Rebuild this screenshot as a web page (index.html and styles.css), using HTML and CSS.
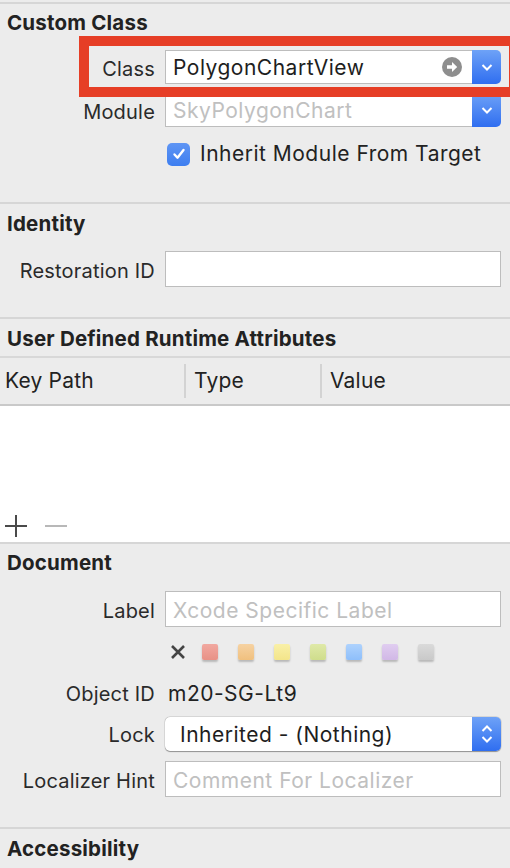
FILE: index.html
```html
<!DOCTYPE html>
<html>
<head>
<meta charset="utf-8">
<link rel="stylesheet" href="styles.css">
</head>
<body>
<div class="inspector">
  <section class="section sec-custom">
    <h2 class="heading">Custom Class</h2>
    <div class="form">
      <div class="row row-class">
        <span class="label">Class</span>
        <div class="combo">
          <div class="field combo-field">
            <span class="value">PolygonChartView</span>
            <svg class="go" width="20" height="20" viewBox="0 0 20 20"><circle cx="10" cy="10" r="10" fill="#8e8e8e"/><path d="M5 8.3h5V5l5.2 5-5.2 5v-3.3H5z" fill="#fff"/></svg>
          </div>
          <div class="blue-btn"><svg width="14" height="10" viewBox="0 0 14 10"><path d="M2.5 3l4.5 4.5L11.5 3" fill="none" stroke="#fff" stroke-width="2"/></svg></div>
        </div>
        <div class="highlight"></div>
      </div>
      <div class="row row-module">
        <span class="label">Module</span>
        <div class="combo">
          <div class="field combo-field"><span class="placeholder">SkyPolygonChart</span></div>
          <div class="blue-btn"><svg width="14" height="10" viewBox="0 0 14 10"><path d="M2.5 3l4.5 4.5L11.5 3" fill="none" stroke="#fff" stroke-width="2"/></svg></div>
        </div>
      </div>
      <div class="row row-check">
        <span class="label"></span>
        <div class="check-wrap">
          <span class="checkbox"><svg width="16" height="16" viewBox="0 0 16 16"><path d="M3.5 8.5l3 3.2L12.5 4" fill="none" stroke="#fff" stroke-width="2.4" stroke-linecap="round" stroke-linejoin="round"/></svg></span>
          <span class="check-text">Inherit Module From Target</span>
        </div>
      </div>
    </div>
  </section>

  <section class="section sec-identity">
    <h2 class="heading">Identity</h2>
    <div class="form">
      <div class="row">
        <span class="label">Restoration ID</span>
        <div class="field"></div>
      </div>
    </div>
  </section>

  <section class="section sec-attrs">
    <h2 class="heading">User Defined Runtime Attributes</h2>
    <div class="table">
      <div class="thead">
        <div class="th th-key">Key Path</div>
        <div class="th th-type">Type</div>
        <div class="th th-value">Value</div>
      </div>
      <div class="tbody">
        <div class="tools">
          <svg width="22" height="22" viewBox="0 0 22 22"><path d="M11 0v22M0 11h22" stroke="#4a4a4a" stroke-width="2"/></svg>
          <svg width="22" height="22" viewBox="0 0 22 22"><path d="M0 11h22" stroke="#b8b8b8" stroke-width="2"/></svg>
        </div>
      </div>
    </div>
  </section>

  <section class="section sec-document">
    <h2 class="heading">Document</h2>
    <div class="form">
      <div class="row row-label">
        <span class="label">Label</span>
        <div class="field"><span class="placeholder">Xcode Specific Label</span></div>
      </div>
      <div class="row row-swatches">
        <span class="label"></span>
        <div class="swatches">
          <svg class="xmark" width="16" height="16" viewBox="0 0 16 16"><path d="M2 2l12 12M14 2L2 14" stroke="#444" stroke-width="2.6"/></svg>
          <span class="swatch sw-red"></span>
          <span class="swatch sw-orange"></span>
          <span class="swatch sw-yellow"></span>
          <span class="swatch sw-green"></span>
          <span class="swatch sw-blue"></span>
          <span class="swatch sw-purple"></span>
          <span class="swatch sw-gray"></span>
        </div>
      </div>
      <div class="row row-objid">
        <span class="label">Object ID</span>
        <span class="plain">m20-SG-Lt9</span>
      </div>
      <div class="row row-lock">
        <span class="label">Lock</span>
        <div class="popup">
          <span class="popup-text">Inherited - (Nothing)</span>
          <div class="blue-btn"><svg width="14" height="22" viewBox="0 0 14 22"><path d="M2.5 8l4.5-4.5L11.5 8M2.5 14l4.5 4.5 4.5-4.5" fill="none" stroke="#fff" stroke-width="2"/></svg></div>
        </div>
      </div>
      <div class="row row-hint">
        <span class="label">Localizer Hint</span>
        <div class="field"><span class="placeholder">Comment For Localizer</span></div>
      </div>
    </div>
  </section>

  <section class="section sec-access">
    <h2 class="heading">Accessibility</h2>
  </section>
</div>
</body>
</html>
```

FILE: styles.css
```css
html, body {
  margin: 0;
  padding: 0;
  background: #ececec;
}
body {
  font-family: Inter, "Open Sans", sans-serif;
  font-size: 21px;
  line-height: 24px;
  letter-spacing: 0.5px;
  color: #262626;
  width: 510px;
  height: 868px;
  overflow: hidden;
}
.inspector {
  padding-top: 2px;
}
.section {
  border-top: 2px solid #d6d6d6;
}
.heading {
  margin: 0;
  padding-left: 7px;
  font-size: 20.5px;
  font-weight: 700;
  line-height: 24px;
  letter-spacing: 0.2px;
  color: #222;
}
.form {
  display: flex;
  flex-direction: column;
}
.row {
  position: relative;
  display: grid;
  grid-template-columns: 155px 336px;
  column-gap: 10px;
  align-items: center;
}
.label {
  text-align: right;
  color: #2a2a2a;
  white-space: nowrap;
  font-size: 20px;
  letter-spacing: 0.2px;
  padding-top: 4px;
}
.field {
  height: 34px;
  box-sizing: border-box;
  background: #fff;
  border: 1px solid #bdbdbd;
  display: flex;
  align-items: center;
  padding-left: 7px;
  padding-top: 3px;
  white-space: nowrap;
}
.combo-field { padding-top: 2px; }
.combo-field .go { margin-top: -2px; }
.placeholder {
  color: #c0c0c0;
}
.value {
  color: #1e1e1e;
  flex: 1;
}

/* Custom class */
.sec-custom .heading { padding-top: 7px; }
.row-class { margin-top: 15px; }
.row-module { margin-top: 9px; }
.row-check { margin-top: 15px; margin-bottom: 36px; }
.row-check .label { padding-top: 0; }
.combo {
  display: flex;
  height: 34px;
}
.combo-field {
  flex: 1;
  border-right: none;
  padding-right: 10px;
}
.go { flex: none; }
.blue-btn {
  width: 29px;
  flex: none;
  background: linear-gradient(#6ea2f7, #2f6ef0);
  border-radius: 0 5px 5px 0;
  display: flex;
  align-items: center;
  justify-content: center;
}
.highlight {
  position: absolute;
  left: 79px;
  right: -9px;
  top: -14px;
  bottom: -13px;
  border: 10px solid #e63e26;
  pointer-events: none;
  z-index: 2;
}
.check-wrap {
  display: flex;
  align-items: center;
  gap: 10px;
  margin-left: 2px;
}
.checkbox {
  width: 23px;
  height: 23px;
  border-radius: 5px;
  background: linear-gradient(#5f95f4, #3d7ef0);
  display: flex;
  align-items: center;
  justify-content: center;
}
.check-text { color: #222; white-space: nowrap; }

/* Identity */
.sec-identity .heading { padding-top: 8px; }
.sec-identity .row { margin-top: 15px; margin-bottom: 30px; }
.sec-identity .field { height: 36px; }

/* Attributes */
.sec-attrs .heading { padding-top: 8px; padding-bottom: 5px; }
.table {
  border-top: 2px solid #d8d8d8;
}
.thead {
  display: grid;
  grid-template-columns: 184px 136px 1fr;
  height: 46px;
  align-items: center;
  border-bottom: 2px solid #c9c9c9;
}
.th {
  height: 34px;
  display: flex;
  align-items: center;
  color: #222;
  letter-spacing: 0.2px;
}
.th-key { padding-left: 5px; }
.th-type, .th-value {
  border-left: 2px solid #d3d3d3;
  padding-left: 8px;
}
.tbody {
  background: #fff;
  height: 136px;
  display: flex;
  align-items: flex-end;
}
.tools {
  display: flex;
  gap: 18px;
  padding: 0 0 5px 5px;
}

/* Document */
.sec-document .heading { padding-top: 7px; }
.row-label { margin-top: 16px; }
.row-label .field { height: 36px; }
.row-swatches { margin-top: 17px; height: 16px; }
.row-swatches .label { padding-top: 0; }
.swatches {
  display: flex;
  align-items: center;
  padding-left: 5px;
}
.xmark { margin-right: 16px; }
.swatch {
  width: 16px;
  height: 16px;
  border-radius: 2px;
  margin-right: 20px;
  box-shadow: 0 2px 2px rgba(0,0,0,0.22);
}
.sw-red { background: linear-gradient(#f1a8a0, #e89186); }
.sw-orange { background: linear-gradient(#f6d2a2, #f0c07e); }
.sw-yellow { background: linear-gradient(#f9f0a8, #f3e58a); }
.sw-green { background: linear-gradient(#dfe9a8, #cfdd8c); }
.sw-blue { background: linear-gradient(#aed2fd, #8ebffb); }
.sw-purple { background: linear-gradient(#e0cdf0, #d1b8e6); }
.sw-gray { background: linear-gradient(#dadada, #c9c9c9); }
.row-objid { margin-top: 18px; }
.plain { padding-left: 3px; padding-top: 4px; color: #222; }
.row-lock { margin-top: 11px; }
.row-lock .label { padding-top: 2px; }
.popup {
  height: 34px;
  display: flex;
  background: #fff;
  border-radius: 5px;
  box-shadow: 0 0.5px 1px rgba(0,0,0,0.35), 0 0 0 0.5px rgba(0,0,0,0.12);
}
.popup-text {
  flex: 1;
  padding-left: 15px;
  padding-top: 2px;
  display: flex;
  align-items: center;
  color: #1e1e1e;
}
.row-hint { margin-top: 10px; margin-bottom: 30px; }
.row-hint .field { height: 36px; }

/* Accessibility */
.sec-access .heading { padding-top: 8px; }
```
